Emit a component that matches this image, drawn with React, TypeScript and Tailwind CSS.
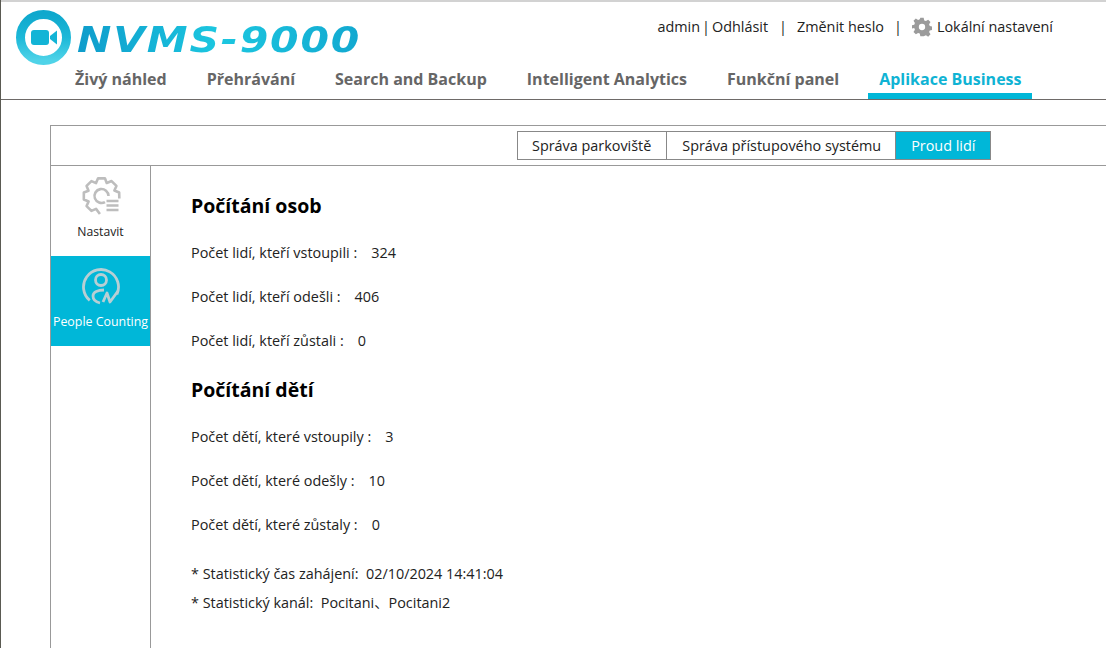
import React from "react";

const F = { fontFamily: '"Open Sans","Noto Sans",sans-serif' };

function pt(cx: number, cy: number, r: number, deg: number) {
  const a = (deg * Math.PI) / 180;
  return `${(cx + r * Math.cos(a)).toFixed(2)} ${(cy + r * Math.sin(a)).toFixed(2)}`;
}

function gearPath() {
  // teeth run round from the bottom to the right, open at the lower right where the three lines sit
  const cx = 20.5, cy = 20, ro = 18, ri = 14;
  const pts: string[] = [pt(cx, cy, ro, 95), pt(cx, cy, ri, 113)];
  for (let c = 135; c <= 315; c += 45) {
    pts.push(pt(cx, cy, ro, c - 11));
    pts.push(pt(cx, cy, ro, c + 11));
    pts.push(pt(cx, cy, ri, c + 22));
  }
  pts.push(pt(cx, cy, ro, 349));
  pts.push(pt(cx, cy, ro, 8));
  return "M" + pts.join("L");
}

function Logo() {
  return (
    <div className="flex items-start">
      <svg width="59" height="56" viewBox="0 0 59 56" className="shrink-0">
        <defs>
          <linearGradient id="r" x1="0" y1="0" x2="0" y2="1">
            <stop offset="0" stopColor="#0fa8cd" />
            <stop offset="0.5" stopColor="#1cb8d8" />
            <stop offset="1" stopColor="#4fd3e8" />
          </linearGradient>
        </defs>
        <circle cx="29.5" cy="28.5" r="23" fill="#fff" stroke="url(#r)" strokeWidth="9" />
        <rect x="17" y="21" width="18" height="15" rx="3" fill="#12b4d6" />
        <path d="M36 27l7-5.5v14L36 30z" fill="#12b4d6" />
      </svg>
      <div
        className="ml-[4px] mt-[10px] origin-left scale-x-[1.14] text-[36px] leading-[42px] italic font-bold tracking-[1.6px] bg-gradient-to-r from-[#0f9ccb] via-[#1cc7e0] to-[#12a8d0] bg-clip-text text-transparent whitespace-nowrap"
        style={{ fontFamily: '"DejaVu Sans",sans-serif' }}
      >
        NVMS-9000
      </div>
    </div>
  );
}

const nav = ["Živý náhled", "Přehrávání", "Search and Backup", "Intelligent Analytics", "Funkční panel"];

function Row({ label, value }: { label: string; value: string }) {
  return (
    <div className="flex h-[44px] items-center text-[14.4px] text-[#222]">
      <span>{label}</span>
      <span className="ml-[14px]">{value}</span>
    </div>
  );
}

export default function App() {
  return (
    <div className="flex h-[648px] w-[1106px] flex-col overflow-hidden border-l border-l-[#5a5a52] bg-white" style={F}>
      <header className="h-[100px] shrink-0 border-t-2 border-t-[#d2d2d2] border-b border-b-[#6e6a68]">
        <div className="flex h-[64px] items-start justify-between pl-[13px] pr-[53px]">
          <div className="pt-[7px]">
            <Logo />
          </div>
          <div className="flex items-center pt-[13px] text-[14.4px] leading-[24px] text-[#222]">
            <span>admin</span>
            <span className="mx-[2px]">|</span>
            <span>Odhlásit</span>
            <span className="ml-[11px] mr-[10px]">|</span>
            <span>Změnit heslo</span>
            <span className="mx-[10px]">|</span>
            <svg width="20" height="20" viewBox="0 0 24 24" className="mr-[5px]" fill="#9b9b9b">
              <path d="M10 1h4l.7 3.1 2 .8 2.7-1.7 2.8 2.8-1.7 2.7.8 2 3.1.7v4l-3.1.7-.8 2 1.7 2.7-2.8 2.8-2.7-1.7-2 .8L14 23h-4l-.7-3.1-2-.8-2.7 1.7-2.8-2.8 1.7-2.7-.8-2L-.4 14v-4l3.1-.7.8-2L1.8 4.6l2.8-2.8 2.7 1.7 2-.8z M12 8.2a3.8 3.8 0 1 0 0 7.6 3.8 3.8 0 0 0 0-7.6z" fillRule="evenodd" />
            </svg>
            <span>Lokální nastavení</span>
          </div>
        </div>
        <nav className="flex h-[33px] pl-[63px] text-[16px] font-bold text-[#666]">
          {nav.map((n) => (
            <div key={n} className="px-[11px] mr-[18px] leading-[26px] whitespace-nowrap">{n}</div>
          ))}
          <div className="h-[33px] border-b-[6px] border-[#00b7d8] px-[11px] leading-[26px] text-[#0fb3d4] whitespace-nowrap">
            Aplikace Business
          </div>
        </nav>
      </header>

      <div className="ml-[49px] mt-[25px] flex flex-1 flex-col border-l border-t border-[#999]">
        <div className="flex h-[40px] shrink-0 items-start border-b border-[#999] pl-[466px] pt-[5px]">
          <div className="flex h-[29px] text-[14.4px] leading-[27px] text-[#222]">
            <div className="border border-[#888] pl-[14px] pr-[15px]">Správa parkoviště</div>
            <div className="border border-l-0 border-[#888] pl-[15px] pr-[14px]">Správa přístupového systému</div>
            <div className="border border-l-0 border-[#888] bg-[#00b7d8] px-[15px] text-white">Proud lidí</div>
          </div>
        </div>
        <div className="flex flex-1">
          <aside className="w-[100px] shrink-0 border-r border-[#999]">
            <div className="flex h-[90px] flex-col items-center pt-[10px]">
              <svg width="40" height="40" viewBox="0 0 40 40" fill="none" stroke="#bdbdbd" strokeWidth="2.6" strokeLinejoin="round">
                <path d={gearPath()} />
                <path d={`M${pt(20.5, 20, 7, 60)}A7 7 0 1 1 ${pt(20.5, 20, 7, 0)}`} />
                <path d="M25.5 25h12M25.5 29.5h12M25.5 34h12" />
              </svg>
              <span className="mt-[7px] text-[12.2px] leading-[18px] text-[#222]">Nastavit</span>
            </div>
            <div className="flex h-[90px] flex-col items-center bg-[#00b7d8] pt-[11px]">
              <svg width="40" height="40" viewBox="0 0 40 40" fill="none" stroke="#b7cfd4" strokeWidth="2.8" strokeLinejoin="round">
                <path d={`M${pt(20, 20, 17.5, 130)}A17.5 17.5 0 1 1 ${pt(20, 20, 17.5, 25)}`} />
                <circle cx="20" cy="13" r="5.5" />
                <path d="M23 23C17 23 12 25 12 29C12 33 15 35 19 36" />
                <path d="M22 35l4-9 3 9 8-11" />
              </svg>
              <span className="mt-[6px] text-[12.4px] leading-[18px] text-white whitespace-nowrap">People Counting</span>
            </div>
          </aside>
          <main className="flex-1 pl-[40px] pt-[25px]">
            <h2 className="mb-[10px] text-[19.5px] font-bold leading-[30px] text-black">Počítání osob</h2>
            <Row label="Počet lidí, kteří vstoupili :" value="324" />
            <Row label="Počet lidí, kteří odešli :" value="406" />
            <Row label="Počet lidí, kteří zůstali :" value="0" />
            <h2 className="mb-[10px] mt-[12px] text-[19.5px] font-bold leading-[30px] text-black">Počítání dětí</h2>
            <Row label="Počet dětí, které vstoupily :" value="3" />
            <Row label="Počet dětí, které odešly :" value="10" />
            <Row label="Počet dětí, které zůstaly :" value="0" />
            <div className="mt-[12px] text-[14.4px] leading-[29px] text-[#222]">
              <div>* Statistický čas zahájení:&nbsp; 02/10/2024 14:41:04</div>
              <div style={{ fontFamily: '"Open Sans","Noto Sans CJK SC",sans-serif' }}>* Statistický kanál:&nbsp; Pocitani、Pocitani2</div>
            </div>
          </main>
        </div>
      </div>
    </div>
  );
}
